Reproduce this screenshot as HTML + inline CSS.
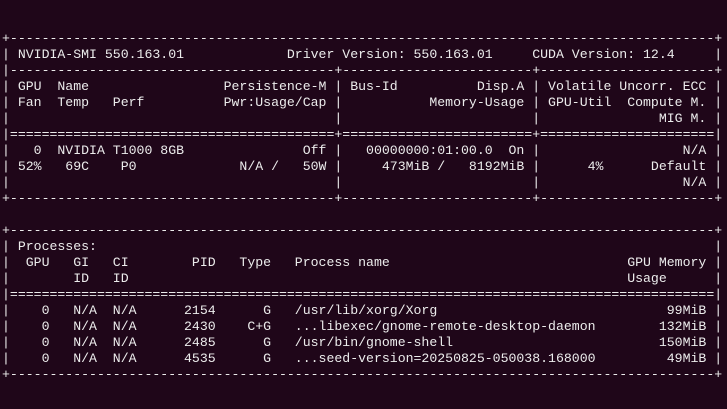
<!DOCTYPE html>
<html><head><meta charset="utf-8"><style>
html,body{margin:0;padding:0;background:#1f0619;width:727px;height:409px;overflow:hidden}
pre{position:absolute;left:2px;top:30.5px;margin:0;font-family:"Liberation Mono",monospace;font-size:13.2px;line-height:16px;color:#ececec;white-space:pre}
</style></head><body><pre>+-----------------------------------------------------------------------------------------+
| NVIDIA-SMI 550.163.01             Driver Version: 550.163.01     CUDA Version: 12.4     |
|-----------------------------------------+------------------------+----------------------+
| GPU  Name                 Persistence-M | Bus-Id          Disp.A | Volatile Uncorr. ECC |
| Fan  Temp   Perf          Pwr:Usage/Cap |           Memory-Usage | GPU-Util  Compute M. |
|                                         |                        |               MIG M. |
|=========================================+========================+======================|
|   0  NVIDIA T1000 8GB               Off |   00000000:01:00.0  On |                  N/A |
| 52%   69C    P0             N/A /   50W |     473MiB /   8192MiB |      4%      Default |
|                                         |                        |                  N/A |
+-----------------------------------------+------------------------+----------------------+
                                                                                         
+-----------------------------------------------------------------------------------------+
| Processes:                                                                              |
|  GPU   GI   CI        PID   Type   Process name                              GPU Memory |
|        ID   ID                                                               Usage      |
|=========================================================================================|
|    0   N/A  N/A      2154      G   /usr/lib/xorg/Xorg                             99MiB |
|    0   N/A  N/A      2430    C+G   ...libexec/gnome-remote-desktop-daemon        132MiB |
|    0   N/A  N/A      2485      G   /usr/bin/gnome-shell                          150MiB |
|    0   N/A  N/A      4535      G   ...seed-version=20250825-050038.168000         49MiB |
+-----------------------------------------------------------------------------------------+</pre></body></html>
